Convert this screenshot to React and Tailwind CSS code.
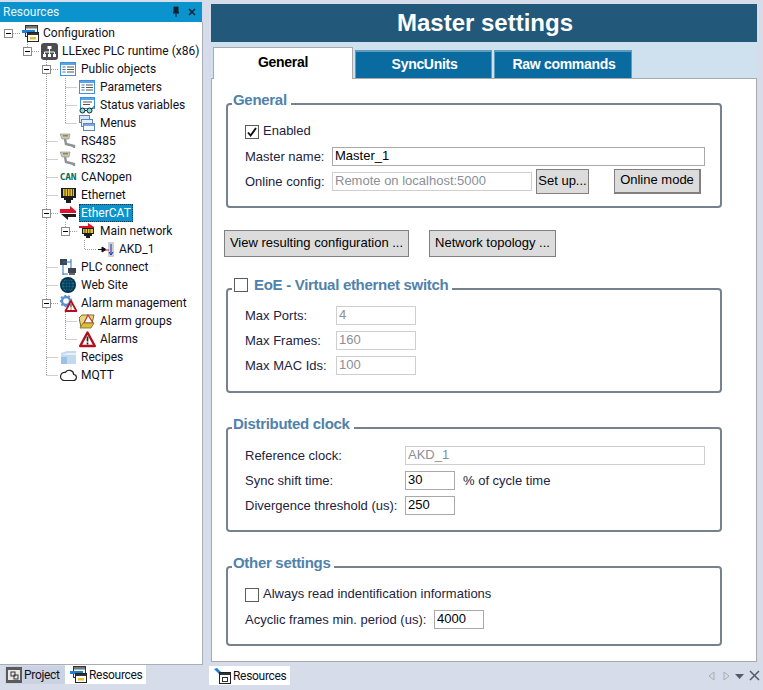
import React from "react";

const Cfg = () => (
  <svg width="17" height="17" viewBox="0 0 17 17">
    <rect x="3.5" y="0.5" width="12" height="11" fill="#f4f4f4" stroke="#333" />
    <rect x="4" y="1" width="11" height="2.5" fill="#777" />
    <rect x="0" y="5" width="13" height="3" fill="#1b82d6" />
    <rect x="5.5" y="7.5" width="11" height="9" fill="#fff" stroke="#222" />
    <rect x="6" y="8" width="10" height="2" fill="#333" />
    <rect x="8" y="12" width="6" height="2.5" fill="#e6c12c" />
  </svg>
);

const Runtime = () => (
  <svg width="17" height="17" viewBox="0 0 17 17">
    <rect x="0" y="0" width="17" height="17" rx="3" fill="#4c4c52" />
    <path d="M8.5 6v3M3.5 11V9h10v2M8.5 9v2" stroke="#fff" fill="none" />
    <rect x="6.5" y="3" width="4" height="3" fill="#fff" />
    <rect x="2" y="11" width="3" height="3" fill="#fff" />
    <rect x="7" y="11" width="3" height="3" fill="#fff" />
    <rect x="12" y="11" width="3" height="3" fill="#fff" />
  </svg>
);

const ListI = () => (
  <svg width="16" height="14" viewBox="0 0 16 14">
    <rect x="0.5" y="0.5" width="15" height="13" fill="#fff" stroke="#3f8fe0" />
    <rect x="1" y="1" width="14" height="2" fill="#5aa5ea" />
    <path d="M2.5 5h3M2.5 7.5h3M2.5 10h3" stroke="#3b6ea8" />
    <path d="M7 5h7M7 7.5h7M7 10h7" stroke="#555" />
  </svg>
);

const Status = () => (
  <svg width="17" height="17" viewBox="0 0 17 17">
    <rect x="1.5" y="0.5" width="14" height="11" fill="#fff" stroke="#3f8fe0" />
    <rect x="2" y="1" width="13" height="2" fill="#5aa5ea" />
    <path d="M4 5h9M4 7.5h7" stroke="#555" />
    <circle cx="3.5" cy="13.5" r="2.5" fill="#7fe0e0" stroke="#222" />
    <circle cx="10.5" cy="13.5" r="2.5" fill="#7fe0e0" stroke="#222" />
    <path d="M6 13.5h2M12.5 12l3-3" stroke="#222" fill="none" />
  </svg>
);

const Menus = () => (
  <svg width="16" height="16" viewBox="0 0 16 16">
    <rect x="0.5" y="0.5" width="10" height="7" fill="#dbe7f6" stroke="#5a87bd" />
    <rect x="2.5" y="4.5" width="11" height="7" fill="#e9f0fa" stroke="#5a87bd" />
    <rect x="4.5" y="8.5" width="11" height="7" fill="#f4f7fc" stroke="#5a87bd" />
    <rect x="5" y="9" width="10" height="2" fill="#7fa9d8" />
  </svg>
);

const Serial = () => (
  <svg width="16" height="16" viewBox="0 0 16 16">
    <path d="M0 1h10l-1 5H2z" fill="#c9c7b8" stroke="#8a8a80" strokeWidth="0.6" />
    <rect x="3" y="2" width="5" height="1.5" fill="#8f8a50" />
    <path d="M5 6l1 5 8 2v2" stroke="#8f9296" strokeWidth="2.4" fill="none" />
  </svg>
);

const Can = () => (
  <span className="w-[17px] text-center font-['DejaVu_Sans_Mono',monospace] font-bold text-[9.5px] leading-none text-[#0b6a50] tracking-[-0.2px]">
    CAN
  </span>
);

const Jack = () => (
  <svg width="15" height="15" viewBox="0 0 15 15">
    <path d="M0 0h15v10h-3v2h-2v3H5v-3H3v-2H0z" fill="#1c1c1c" />
    <rect x="2" y="1" width="11" height="7" fill="#e5c52a" />
    <path d="M4 1v7M6.5 1v7M9 1v7M11.5 1v7" stroke="#5a4c10" />
  </svg>
);

const Ecat = () => (
  <svg width="16" height="14" viewBox="0 0 16 14">
    <path d="M0 3h10V0l6 5v2H0z" fill="#d9142b" />
    <path d="M1 8h15v3H8v3z" fill="#1a1a1a" />
  </svg>
);

const MainNet = () => (
  <svg width="16" height="16" viewBox="0 0 16 16">
    <path d="M0 3h9V0l6 4v1H0z" fill="#d9142b" />
    <path d="M3 5h12v6h-2v2h-2v2H7v-2H5v-2H3z" fill="#1c1c1c" />
    <rect x="4" y="6" width="10" height="4" fill="#e5c52a" />
    <path d="M6 6v4M8.5 6v4M11 6v4" stroke="#5a4c10" />
  </svg>
);

const Akd = () => (
  <svg width="16" height="15" viewBox="0 0 16 15">
    <rect x="10" y="0" width="6" height="15" fill="#cfcfcf" />
    <path d="M0 7.5h4M4 5l4 2.5L4 10z" stroke="#111" fill="#111" />
    <path d="M7 8h4" stroke="#c02020" />
    <path d="M13 2v11M11 10l2 3 2-3" stroke="#1030c8" fill="none" />
  </svg>
);

const PlcConnect = () => (
  <svg width="16" height="17" viewBox="0 0 16 17">
    <rect x="0" y="0" width="7" height="6" fill="#3a4650" />
    <rect x="8" y="9" width="8" height="5" fill="#3a4650" />
    <path d="M11 0v9M3 6v10M3 3h8M8 15h-5" stroke="#2a6fc0" fill="none" />
    <rect x="9" y="14" width="6" height="2" fill="#666" />
  </svg>
);

const Globe = () => (
  <svg width="16" height="16" viewBox="0 0 16 16">
    <circle cx="8" cy="8" r="8" fill="#062f44" />
    <circle cx="8" cy="8" r="6.3" fill="#0f6f94" />
    <ellipse cx="8" cy="8" rx="3" ry="6.3" fill="none" stroke="#062f44" />
    <path d="M1.7 8h12.6M8 1.7v12.6M2.5 5h11M2.5 11h11" stroke="#062f44" fill="none" />
  </svg>
);

const Triangle = () => (
  <svg width="17" height="17" viewBox="0 0 17 17">
    <path d="M8.5 1.5L15.8 15H1.2z" fill="#fff" stroke="#b40f1c" strokeWidth="2.4" strokeLinejoin="round" />
    <path d="M8.5 5.5v5M8.5 11.5v2" stroke="#222" strokeWidth="1.7" />
  </svg>
);

const AlarmMgmt = () => (
  <svg width="17" height="17" viewBox="0 0 17 17">
    <circle cx="6" cy="6" r="4" fill="none" stroke="#5b8fd0" strokeWidth="2.4" />
    <circle cx="6" cy="6" r="5.6" fill="none" stroke="#5b8fd0" strokeWidth="1.4" strokeDasharray="2 2" />
    <path d="M11 6L16.5 16H5.5z" fill="#fff" stroke="#b40f1c" strokeWidth="1.8" strokeLinejoin="round" />
    <path d="M11 9v3.5M11 13.5v1" stroke="#222" />
  </svg>
);

const AlarmGroups = () => (
  <svg width="16" height="16" viewBox="0 0 16 16">
    <path d="M0 5l3-3h6l6 0-3 12H2z" fill="#e6d880" stroke="#7d6c1a" />
    <path d="M9 2L14 10H5z" fill="#fff" stroke="#c33" strokeWidth="1.2" />
    <path d="M1 15l3-5h11l-3 5z" fill="#d9bf40" stroke="#7d6c1a" strokeWidth="0.8" />
  </svg>
);

const Folder = () => (
  <svg width="15" height="14" viewBox="0 0 15 14">
    <path d="M0 3l6-2h9v13H0z" fill="#c3d9f0" />
    <path d="M0 5l7-2h8v2H0z" fill="#e8f0f9" />
    <path d="M0 7h6v7H0z" fill="#9cc0e6" />
  </svg>
);

const Cloud = () => (
  <svg width="17" height="12" viewBox="0 0 17 12">
    <path
      d="M4 11.5h9a3 3 0 0 0 .7-6A4.5 4.5 0 0 0 5.4 3.4 4 4 0 0 0 4 11.5z"
      fill="#fff"
      stroke="#222"
      strokeWidth="1.2"
    />
  </svg>
);

const Expander = () => (
  <span className="w-[9px] h-[9px] bg-white border border-[#8a8a8a] flex items-center justify-center shrink-0">
    <span className="w-[5px] h-px bg-black" />
  </span>
);

// level = indent step, open = has expander box
const tree = [
  { label: "Configuration", level: 0, open: true, icon: <Cfg /> },
  { label: "LLExec PLC runtime (x86)", level: 1, open: true, icon: <Runtime /> },
  { label: "Public objects", level: 2, open: true, icon: <ListI /> },
  { label: "Parameters", level: 3, icon: <ListI /> },
  { label: "Status variables", level: 3, icon: <Status /> },
  { label: "Menus", level: 3, icon: <Menus /> },
  { label: "RS485", level: 2, icon: <Serial /> },
  { label: "RS232", level: 2, icon: <Serial /> },
  { label: "CANopen", level: 2, icon: <Can /> },
  { label: "Ethernet", level: 2, icon: <Jack /> },
  { label: "EtherCAT", level: 2, open: true, icon: <Ecat />, selected: true },
  { label: "Main network", level: 3, open: true, icon: <MainNet /> },
  { label: "AKD_1", level: 4, icon: <Akd /> },
  { label: "PLC connect", level: 2, icon: <PlcConnect /> },
  { label: "Web Site", level: 2, icon: <Globe /> },
  { label: "Alarm management", level: 2, open: true, icon: <AlarmMgmt /> },
  { label: "Alarm groups", level: 3, icon: <AlarmGroups /> },
  { label: "Alarms", level: 3, icon: <Triangle /> },
  { label: "Recipes", level: 2, icon: <Folder /> },
  { label: "MQTT", level: 2, icon: <Cloud /> },
];

const indentClass = ["pl-[4px]", "pl-[23px]", "pl-[42px]", "pl-[61px]", "pl-[80px]"];

const TreeLines = () => (
  <svg className="absolute left-0 top-[2px]" width="200" height="380" viewBox="0 0 200 380">
    <path
      d="M13 9.5h7M27.5 18v5M32 27.5h7M46.5 36V351.5M51 45.5h7M65.5 54V99.5M65.5 63.5h12M65.5 81.5h12M65.5 99.5h12M46.5 117.5h12M46.5 135.5h12M46.5 153.5h12M46.5 171.5h12M51 189.5h7M65.5 198v9M70 207.5h7M84.5 216v9.5h12M46.5 243.5h12M46.5 261.5h12M51 279.5h7M65.5 288v27.5M65.5 297.5h12M65.5 315.5h12M46.5 333.5h12M46.5 351.5h12"
      fill="none"
      stroke="#a0a0a0"
      strokeDasharray="1 1"
    />
  </svg>
);

const TreeRow = ({ item }) => (
  <div className={`relative h-[18px] flex items-center whitespace-nowrap ${indentClass[item.level]}`}>
    <span className="w-[9px] shrink-0 flex items-center">{item.open && <Expander />}</span>
    <span className="w-[8px] shrink-0" />
    <span className="w-[18px] h-[18px] shrink-0 flex items-center justify-center bg-white">{item.icon}</span>
    <span
      className={
        item.selected
          ? "ml-[2px] h-[18px] px-[2px] flex items-center bg-[#0a93cc] text-white outline-1 -outline-offset-1 outline-dotted outline-[#0b3a55]"
          : "ml-[4px] text-[#10101a]"
      }
    >
      {item.label}
    </span>
  </div>
);

const Label = ({ className = "", children }) => (
  <span className={`text-[#1c2340] ${className}`}>{children}</span>
);

const Field = ({ value, disabled, className = "" }) => (
  <div
    className={`h-[19px] flex items-center pl-[2px] pb-[2px] border bg-white ${
      disabled ? "border-[#cfcfcf] text-[#8a8f98]" : "border-[#a9a9a9] text-black"
    } ${className}`}
  >
    {value}
  </div>
);

const Check = ({ checked, className = "" }) => (
  <span className={`w-[14px] h-[14px] bg-white border border-[#5c5c5c] flex items-center justify-center shrink-0 ${className}`}>
    {checked && (
      <svg width="10" height="10" viewBox="0 0 10 10">
        <path d="M1 5.5l2.6 3L9 1" stroke="#111" strokeWidth="1.9" fill="none" />
      </svg>
    )}
  </span>
);

const Group = ({ title, check, className = "", children }) => (
  <div className={`relative w-[496px] border-2 border-[#76838f] rounded-[4px] ${className}`}>
    <div className="absolute left-[4px] -top-[15px] h-[20px] flex items-center gap-[6px] bg-white pl-px pr-[4px]">
      {check && <Check className="ml-px" />}
      <span className="font-bold text-[15px] tracking-[-0.3px] text-[#5082ab]">{title}</span>
    </div>
    {children}
  </div>
);

const Row = ({ className = "", children }) => (
  <div className={`flex items-center h-[19px] ${className}`}>{children}</div>
);

const CheckRow = ({ checked, children }) => (
  <div className="flex items-center gap-[4px] h-[14px]">
    <Check checked={checked} />
    <span className="pb-[3px] text-[#1c2340]">{children}</span>
  </div>
);

const Btn = ({ className = "", children }) => (
  <button className={`flex items-center justify-center pb-[2px] bg-[#dcdcdc] border border-[#808080] text-black ${className}`}>
    {children}
  </button>
);

const SideTab = ({ icon, label, active, className = "" }) => (
  <div
    className={`flex items-center gap-[2px] tracking-[-0.3px] text-[#10101a] ${active ? "bg-white" : "bg-[#cbd3e3]"} ${className}`}
  >
    {icon}
    {label}
  </div>
);

const ProjectIcon = () => (
  <svg width="16" height="16" viewBox="0 0 16 16">
    <rect width="16" height="16" fill="#5a5a5a" />
    <rect x="2" y="3" width="12" height="10" fill="#e8e8e8" />
    <rect x="5" y="5" width="4" height="4" fill="none" stroke="#333" />
    <rect x="8" y="8" width="4" height="4" fill="none" stroke="#333" />
  </svg>
);

const ResIcon = () => (
  <svg width="17" height="16" viewBox="0 0 17 16">
    <path d="M0 1l3-1 5 5-2 2z" fill="#1b82d6" />
    <rect x="5.5" y="4.5" width="11" height="11" fill="#fff" stroke="#222" />
    <rect x="6" y="5" width="10" height="2" fill="#333" />
    <rect x="8.5" y="9.5" width="5" height="4" fill="none" stroke="#333" />
  </svg>
);

export default function App() {
  return (
    <div className="w-[763px] h-[690px] flex bg-[#d6dce9] overflow-hidden font-['Liberation_Sans',Arial,sans-serif] text-[13px]">
      {/* Left dock */}
      <div className="w-[203px] shrink-0 flex flex-col pt-[2px] font-['Roboto',sans-serif] text-[12px]">
        <div className="h-[20px] bg-[#0a93cc] flex items-center justify-between pl-[3px] pr-[5px] text-[#e8f6fc] mr-px">
          <span>Resources</span>
          <div className="flex items-center gap-[6px]">
            <svg width="10" height="12" viewBox="0 0 10 12">
              <path d="M3 1h4v5l1 1H2l1-1zM5 7v4" fill="#123" stroke="#123" />
            </svg>
            <svg width="10" height="10" viewBox="0 0 10 10">
              <path d="M2 2l6 6M8 2l-6 6" stroke="#123" strokeWidth="1.5" />
            </svg>
          </div>
        </div>
        <div className="relative flex-1 bg-white border-r border-b border-[#a8adb8] pt-[2px] min-h-0">
          <TreeLines />
          <div className="relative">
            {tree.map((item) => (
              <TreeRow key={item.label} item={item} />
            ))}
          </div>
        </div>
        <div className="h-[25px] shrink-0 flex items-start pl-[5px]">
          <SideTab icon={<ProjectIcon />} label="Project" className="w-[60px] h-[18px] mt-px pl-px" />
          <SideTab icon={<Cfg />} label="Resources" active className="w-[81px] h-[19px] pl-[5px]" />
        </div>
      </div>

      {/* Main document */}
      <div className="w-[546px] ml-[8px] shrink-0 flex flex-col pt-[4px]">
        <div className="h-[38px] shrink-0 bg-[#22587a] flex items-center justify-center pl-[2px] text-white font-bold text-[24px]">
          Master settings
        </div>
        <div className="h-[36px] shrink-0 bg-[#cfe0ee] flex items-end pl-[2px] font-bold text-[14px] tracking-[-0.3px]">
          <div className="relative z-10 w-[140px] h-[32px] -mb-px mr-[2px] pb-[2px] bg-white border border-b-0 border-[#a9a9a9] flex items-center justify-center text-black">
            General
          </div>
          <div className="w-[137px] h-[28px] mr-[2px] pb-[2px] pl-[2px] bg-[#0a6ba0] border-t-2 border-x border-[#5f9bbd] flex items-center justify-center text-white">
            SyncUnits
          </div>
          <div className="w-[138px] h-[28px] pb-[2px] pl-[2px] bg-[#0a6ba0] border-t-2 border-x border-[#5f9bbd] flex items-center justify-center text-white">
            Raw commands
          </div>
        </div>
        <div className="h-[584px] shrink-0 bg-white border border-[#a9a9a9] pl-[14px] pt-[24px]">
          <Group title="General" className="h-[105px] pl-[17px] pt-[20px]">
            <CheckRow checked>Enabled</CheckRow>
            <Row className="mt-[8px]">
              <Label className="w-[87px]">Master name:</Label>
              <Field value="Master_1" className="w-[373px]" />
            </Row>
            <div className="flex items-center h-[25px] mt-[3px]">
              <Label className="w-[87px]">Online config:</Label>
              <Field value="Remote on localhost:5000" disabled className="w-[200px]" />
              <Btn className="w-[53px] h-[25px] ml-[4px]">Set up...</Btn>
              <Btn className="w-[87px] h-[25px] ml-[25px] border-b-2 border-r-2 border-[#666]">Online mode</Btn>
            </div>
          </Group>

          <div className="flex -ml-[2px] mt-[22px] gap-[20px]">
            <Btn className="w-[185px] h-[27px]">View resulting configuration ...</Btn>
            <Btn className="w-[127px] h-[27px]">Network topology ...</Btn>
          </div>

          <Group title="EoE - Virtual ethernet switch" check className="h-[105px] mt-[31px] pl-[17px] pt-[16px]">
            <div className="flex flex-col gap-[6px]">
              <Row>
                <Label className="w-[91px]">Max Ports:</Label>
                <Field value="4" disabled className="w-[80px]" />
              </Row>
              <Row>
                <Label className="w-[91px]">Max Frames:</Label>
                <Field value="160" disabled className="w-[80px]" />
              </Row>
              <Row>
                <Label className="w-[91px]">Max MAC Ids:</Label>
                <Field value="100" disabled className="w-[80px]" />
              </Row>
            </div>
          </Group>

          <Group title="Distributed clock" className="h-[105px] mt-[34px] pl-[17px] pt-[17px]">
            <div className="flex flex-col gap-[6px]">
              <Row>
                <Label className="w-[160px]">Reference clock:</Label>
                <Field value="AKD_1" disabled className="w-[300px]" />
              </Row>
              <Row>
                <Label className="w-[160px]">Sync shift time:</Label>
                <Field value="30" className="w-[50px]" />
                <Label className="ml-[8px]">% of cycle time</Label>
              </Row>
              <Row>
                <Label className="w-[160px]">Divergence threshold (us):</Label>
                <Field value="250" className="w-[50px]" />
              </Row>
            </div>
          </Group>

          <Group title="Other settings" className="h-[80px] mt-[34px] pl-[17px] pt-[20px]">
            <CheckRow>Always read indentification informations</CheckRow>
            <Row className="mt-[8px]">
              <Label className="w-[189px]">Acyclic frames min. period (us):</Label>
              <Field value="4000" className="w-[50px]" />
            </Row>
          </Group>
        </div>
        <div className="flex-1 flex items-start justify-between pt-[4px] -ml-[2px] font-['Roboto',sans-serif] text-[12px]">
          <SideTab icon={<ResIcon />} label="Resources" active className="w-[81px] h-[19px] pl-[5px]" />
          <div className="flex items-center h-[19px] -mr-[3px]">
            <svg width="9" height="10" viewBox="0 0 9 10">
              <path d="M7 1L2 5l5 4z" fill="none" stroke="#a8acb4" />
            </svg>
            <svg className="ml-[6px]" width="9" height="10" viewBox="0 0 9 10">
              <path d="M2 1l5 4-5 4z" fill="none" stroke="#a8acb4" />
            </svg>
            <svg className="ml-[4px]" width="9" height="8" viewBox="0 0 9 8">
              <path d="M0 2h9L4.5 7z" fill="#555b66" />
            </svg>
            <svg className="ml-[5px]" width="11" height="11" viewBox="0 0 11 11">
              <path d="M1 1l9 9M10 1l-9 9" stroke="#555b66" strokeWidth="1.5" />
            </svg>
          </div>
        </div>
      </div>
    </div>
  );
}
